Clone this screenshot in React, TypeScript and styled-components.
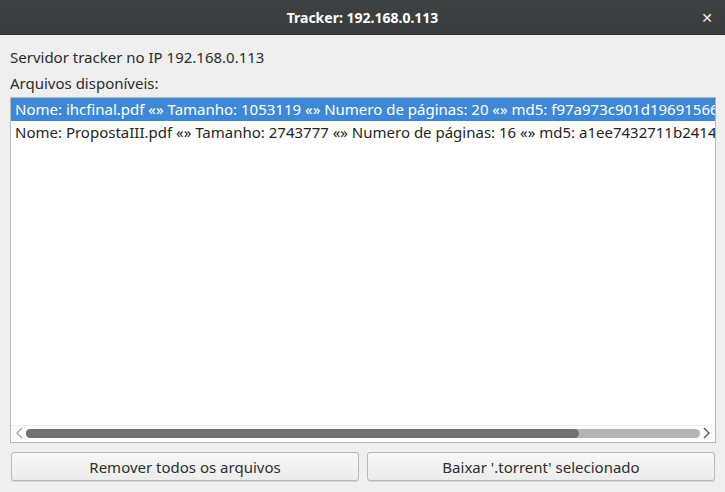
import React from "react";
import styled, { createGlobalStyle } from "styled-components";

const Global = createGlobalStyle`
  *, *::before, *::after { box-sizing: border-box; }
  html, body { margin: 0; padding: 0; }
  body {
    width: 725px; height: 492px; overflow: hidden;
    background: #eff0f1;
    font-family: "Noto Sans", "DejaVu Sans", sans-serif;
  }
`;

const Window = styled.div`
  width: 725px; height: 492px;
  display: flex; flex-direction: column;
  background: #efefef;
`;

const TitleBar = styled.div`
  height: 35px; flex: none;
  background: linear-gradient(#3f4244, #393c3d);
  border-bottom: 1px solid #2a2c2d;
  display: flex; align-items: center; justify-content: center;
  position: relative;
  color: #ffffff;
  font-size: 14px; font-weight: bold;
`;

const Close = styled.span`
  position: absolute; right: 12px; top: 8px;
  font-size: 14px; font-weight: bold; color: #f2f2f2;
`;

const Body = styled.div`
  flex: 1; display: flex; flex-direction: column;
  padding: 12px 10px 11px 10px;
  font-size: 15px; color: #2b2b2b;
  min-height: 0;
`;

const Label = styled.div`
  height: 21px; line-height: 21px;
  margin-bottom: 5px;
`;

const ListBox = styled.div`
  flex: 1;
  margin-top: -2px;
  width: 706px;
  background: #ffffff;
  border: 1px solid #b6b8b9;
  display: flex; flex-direction: column;
  overflow: hidden;
  min-height: 0;
`;

const Rows = styled.div`
  flex: 1; overflow: hidden;
`;

const Row = styled.div<{ $sel?: boolean }>`
  height: 23px; line-height: 22px;
  padding-left: 4px;
  white-space: nowrap;
  overflow: hidden;
  background: ${(p) => (p.$sel ? "#3e88d6" : "transparent")};
  color: ${(p) => (p.$sel ? "#ffffff" : "#242424")};
`;

const HScroll = styled.div`
  height: 17px; flex: none;
  display: flex; align-items: center;
  background: #fbfbfb;
  border-top: 1px solid #ececec;
  padding: 0 4px 2px 4px;
  gap: 2px;
`;

const Arrow = styled.svg`
  width: 9px; height: 12px; flex: none;
`;

const Track = styled.div`
  flex: 1; height: 9px; border-radius: 5px;
  background: #b2b3b4;
`;

const Thumb = styled.div`
  height: 9px; border-radius: 5px;
  background: #6e7173;
`;

const Buttons = styled.div`
  display: grid; grid-template-columns: 348px 348px;
  gap: 8px;
  margin-top: 9px;
  margin-left: 1px;
`;

const Button = styled.button`
  height: 29px;
  font-family: inherit; font-size: 15px; color: #2e2e2e;
  background: linear-gradient(#f7f7f7, #ececec);
  border: 1px solid #b4b6b7;
  border-radius: 3px;
  box-shadow: 0 1px 0 #d5d5d5;
  padding: 0;
`;

export default function App() {
  return (
    <Window>
      <Global />
      <TitleBar>
        Tracker: 192.168.0.113
        <Close>✕</Close>
      </TitleBar>
      <Body>
        <Label>Servidor tracker no IP 192.168.0.113</Label>
        <Label>Arquivos disponíveis:</Label>
        <ListBox>
          <Rows>
            <Row $sel>
              Nome: ihcfinal.pdf «» Tamanho: 1053119 «» Numero de páginas: 20 «» md5: f97a973c901d19691566
            </Row>
            <Row>
              Nome: PropostaIII.pdf «» Tamanho: 2743777 «» Numero de páginas: 16 «» md5: a1ee7432711b2414
            </Row>
          </Rows>
          <HScroll>
            <Arrow viewBox="0 0 9 12">
              <path d="M7 1 L2 6 L7 11" fill="none" stroke="#a0a2a3" strokeWidth="1.2" />
            </Arrow>
            <Track>
              <Thumb style={{ width: "82%" }} />
            </Track>
            <Arrow viewBox="0 0 9 12">
              <path d="M2 1 L7 6 L2 11" fill="none" stroke="#4a4c4e" strokeWidth="1.2" />
            </Arrow>
          </HScroll>
        </ListBox>
        <Buttons>
          <Button>Remover todos os arquivos</Button>
          <Button>Baixar '.torrent' selecionado</Button>
        </Buttons>
      </Body>
    </Window>
  );
}
